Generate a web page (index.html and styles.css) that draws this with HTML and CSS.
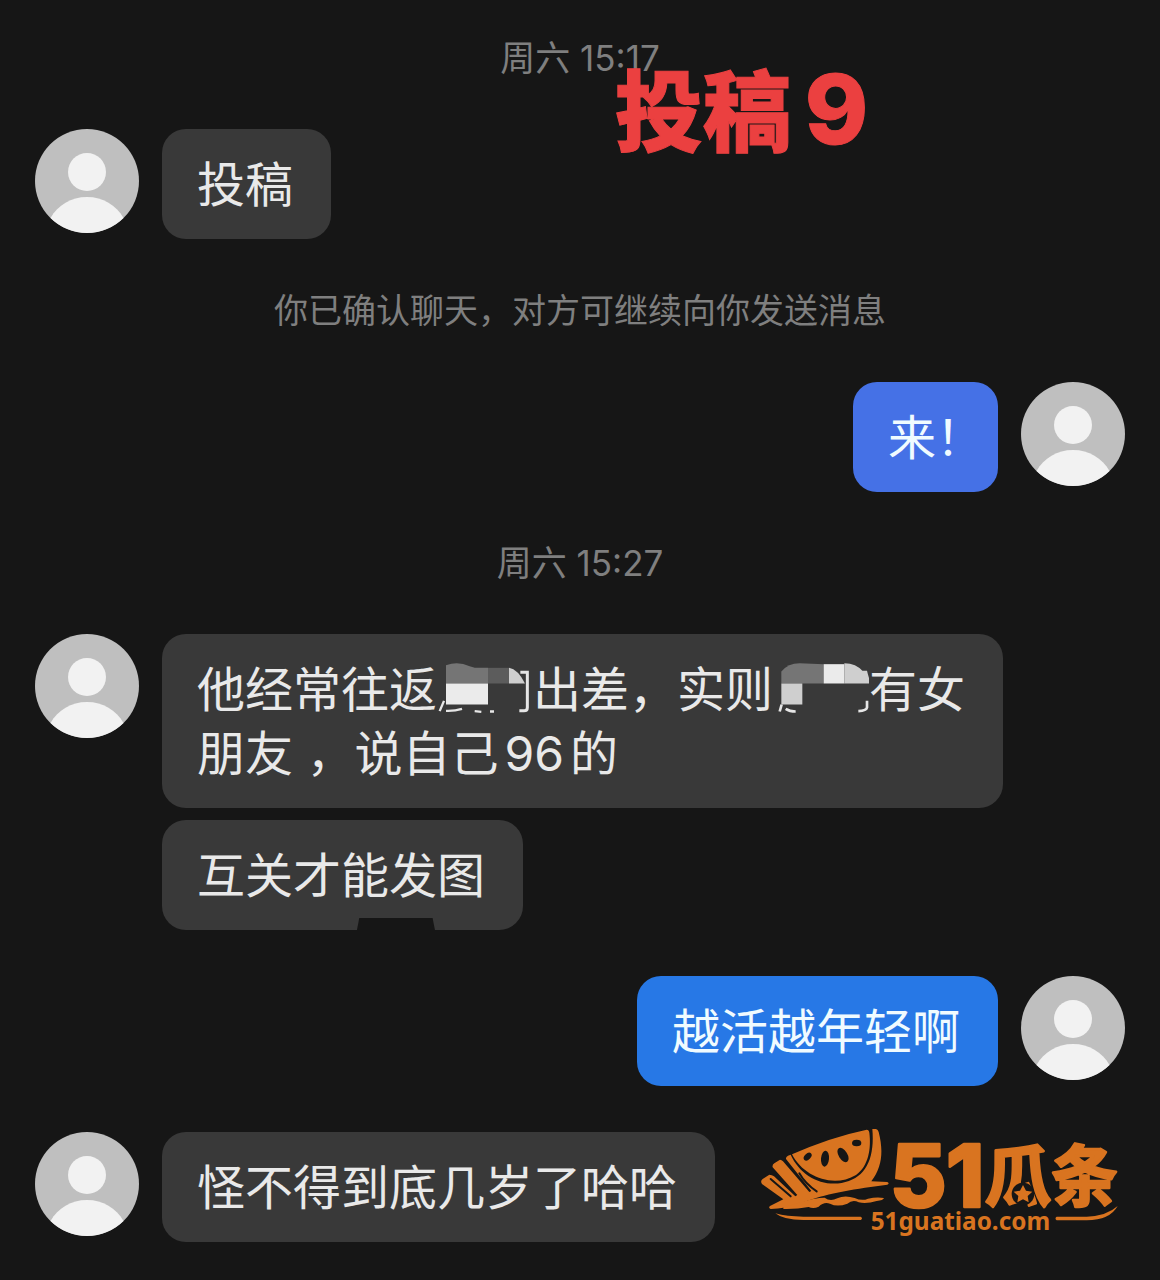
FILE: index.html
```html
<!DOCTYPE html>
<html lang="zh-CN">
<head>
    <meta charset="UTF-8">
    <meta name="viewport" content="width=device-width, initial-scale=1.0">
    <title>投稿9</title>
    <link rel="stylesheet" href="styles.css">
</head>
<body>
    <svg class="defs" width="0" height="0" aria-hidden="true">
        <symbol id="avatar" viewBox="0 0 104 104">
            <circle cx="52" cy="52" r="52" fill="#bfbfbf"/>
            <circle cx="52" cy="43" r="19" fill="#f2f2f2"/>
            <path d="M15.500 89 C23 76 36 68 52 68 S81 76 88.500 89 A52 52 0 0 1 15.500 89Z" fill="#f2f2f2"/>
        </symbol>
    </svg>

    <main class="chat">
        <time class="time">周六 15:17</time>

        <div class="message">
            <svg class="avatar" aria-hidden="true"><use href="#avatar"/></svg>
            <div class="bubbles">
                <p class="bubble">投稿</p>
            </div>
        </div>

        <p class="notice">你已确认聊天，对方可继续向你发送消息</p>

        <div class="message mine">
            <svg class="avatar" aria-hidden="true"><use href="#avatar"/></svg>
            <div class="bubbles">
                <p class="bubble indigo">来！</p>
            </div>
        </div>

        <time class="time">周六 15:27</time>

        <div class="message">
            <svg class="avatar" aria-hidden="true"><use href="#avatar"/></svg>
            <div class="bubbles">
                <p class="bubble">他经常往返<span class="mask">　　<svg viewBox="27 61 288 174" aria-hidden="true">
                    <path d="M54 75 Q90 62 125 78 L140 83 H180 V130 H54Z" fill="#757575"/>
                    <path d="M180 83 H243 V130 H180Z" fill="#5c5c5c"/>
                    <path d="M243 83 Q270 88 291 130 H243Z" fill="#cfcfcf"/>
                    <path d="M54 130 H180 V193 H54Z" fill="#ebebeb"/>
                    <path d="M277 96 H298 V202 Q298 212 288 212 H274" fill="none" stroke="#e6e6e6" stroke-width="9"/>
                    <path d="M48 182 L35 213 M54 212 Q80 213 102 206 M140 213 L160 215 M186 214 H198" fill="none" stroke="#e6e6e6" stroke-width="7"/>
                </svg></span>出差，实则<span class="mask">　　<svg viewBox="350 61 288 174" aria-hidden="true">
                    <path d="M375 94 Q395 69 430 69 L502 72 V130 H375Z" fill="#757575"/>
                    <path d="M502 72 H564 V130 H502Z" fill="#ebebeb"/>
                    <path d="M564 69 Q600 70 618 92 H632 Q636 110 644 130 H564Z" fill="#cfcfcf"/>
                    <path d="M375 130 H438 V193 H375Z" fill="#cfcfcf"/>
                    <path d="M376 193 L370 214 M388 206 Q400 214 418 214 M632 182 V202 Q630 212 606 213" fill="none" stroke="#e6e6e6" stroke-width="8"/>
                </svg></span>有女<br>朋友 ，说自己96的</p>
                <p class="bubble notched">互关才能发图</p>
            </div>
        </div>

        <div class="message mine">
            <svg class="avatar" aria-hidden="true"><use href="#avatar"/></svg>
            <div class="bubbles">
                <p class="bubble blue">越活越年轻啊</p>
            </div>
        </div>

        <div class="message">
            <svg class="avatar" aria-hidden="true"><use href="#avatar"/></svg>
            <div class="bubbles">
                <p class="bubble">怪不得到底几岁了哈哈</p>
            </div>
        </div>

        <h1 class="stamp">投稿<span class="number">9</span></h1>

        <svg class="logo" viewBox="0 0 1170 420" role="img" aria-label="51瓜条 51guatiao.com">
            <!-- melon slice -->
            <path d="M126 133 Q240 82 350 59 Q357 59 358 68 C364 115 356 168 318 195 C250 236 160 200 126 133Z"/>
            <path d="M367 57 H378 Q384 58 386 66 C400 120 398 170 364 214 L412 216 Q420 220 412 224 L362 231 C270 244 190 262 150 282 Q105 296 62 297 Q54 294 60 288 L100 268 L36 222 Q30 213 38 207 L58 194 Q66 194 72 199 L136 259 L142 255 L68 172 Q66 164 73 160 L90 149 Q95 150 99 154 L178 246 L184 243 L108 147 Q107 140 114 137 L122 134 C150 195 210 229 275 219 C345 207 375 150 367 57Z"/>
            <path d="M100 292 C150 278 190 262 224 263 Q240 276 262 265 T314 264 Q336 274 354 266 Q380 260 402 264 Q400 271 380 273 Q350 282 326 277 Q308 268 292 281 Q262 292 240 281 Q222 274 206 290 Q190 298 176 291 Q140 298 100 297Z"/>
            <path d="M76 310 Q110 320 160 320 H332 Q340 325 332 330 H160 Q100 330 76 310Z"/>
            <path d="M920 320 H1010 Q1070 318 1103 288 Q1080 330 1010 331 H920 Q913 325 920 320Z"/>
            <g class="cut">
                <ellipse cx="173" cy="140" rx="9" ry="14" transform="rotate(45 173 140)"/>
                <ellipse cx="225" cy="146" rx="12" ry="24" transform="rotate(5 225 146)"/>
                <ellipse cx="279" cy="135" rx="13" ry="24" transform="rotate(-32 279 135)"/>
                <ellipse cx="320" cy="99" rx="14" ry="10"/>
            </g>
            <path class="groove" d="M62 207 L122 259 M148 190 Q166 222 200 244"/>
            <text class="logo-digits" y="292"><tspan x="420">5</tspan><tspan x="588">1</tspan></text>
            <text class="logo-name" x="704" y="274">瓜条</text>
            <circle class="cut" cx="819" cy="252" r="34"/>
            <path d="M819 225 L828 242 L847 245 L833 258 L836 277 L819 268 L802 277 L805 258 L791 245 L810 242Z"/>
            <text class="logo-site" x="362" y="359">51guatiao.com</text>
        </svg>
    </main>
</body>
</html>
```
FILE: styles.css
```css
* {
    box-sizing: border-box;
}
body {
    margin: 0;
    background-color: #161616;
    color: #e9e9e9;
    font-family: Inter, "Noto Sans CJK SC", sans-serif;
    text-autospace: normal;
}
p, h1 {
    margin: 0;
}
.defs {
    position: absolute;
}
.chat {
    position: relative;
    display: flex;
    flex-direction: column;
    gap: 46px;
    min-height: 100vh;
    padding: 33px 35px;
}
.time, .notice {
    color: #7f7f7f;
    font-size: 35px;
    line-height: 50px;
    text-align: center;
}
.notice {
    padding-top: 1px;
    font-size: 34px;
}
.message {
    display: flex;
    align-items: flex-start;
    gap: 23px;
}
.mine {
    flex-direction: row-reverse;
}
.avatar {
    flex: none;
    width: 104px;
    height: 104px;
}
.bubbles {
    display: flex;
    flex-direction: column;
    align-items: flex-start;
    gap: 12px;
}
.bubble {
    position: relative;
    padding: 24px 38px 22px 35px;
    border-radius: 24px;
    background-color: #393939;
    font-size: 48px;
    line-height: 64px;
}
.indigo {
    background-color: #4571e6;
    color: #f0fbff;
    font-feature-settings: "halt";
}
.blue {
    background-color: #2778e6;
    color: #f0fbff;
}
.mask {
    position: relative;
}
.mask svg {
    position: absolute;
    top: 0;
    left: 0;
    width: 100%;
    height: 100%;
}
.notched::after {
    content: "";
    position: absolute;
    bottom: 0;
    left: 54%;
    width: 78px;
    height: 12px;
    background-color: #161616;
    clip-path: polygon(3% 0, 97% 0, 100% 100%, 0 100%);
}
.stamp {
    position: absolute;
    top: 53px;
    left: 53%;
    color: #eb4040;
    font-size: 88px;
    font-weight: 900;
    line-height: 112px;
    -webkit-text-stroke: 1px #eb4040;
}
.number {
    margin-left: 3px;
    font-size: 96px;
    font-weight: 800;
}
.logo {
    position: absolute;
    right: 20px;
    bottom: 30px;
    width: 390px;
    fill: #d97420;
}
.cut {
    fill: #161616;
}
.groove {
    fill: none;
    stroke: #161616;
    stroke-width: 6px;
    stroke-linecap: round;
}
.logo-digits, .logo-name {
    stroke: #d97420;
    stroke-width: 8px;
    stroke-linejoin: round;
}
.logo-digits {
    font-family: Inter, sans-serif;
    font-size: 260px;
    font-weight: 800;
}
.logo-name {
    font-family: "Noto Sans CJK SC", sans-serif;
    font-size: 200px;
    font-weight: 700;
}
.logo-site {
    font-family: "Noto Sans", sans-serif;
    font-size: 73px;
    font-weight: 700;
}
```
